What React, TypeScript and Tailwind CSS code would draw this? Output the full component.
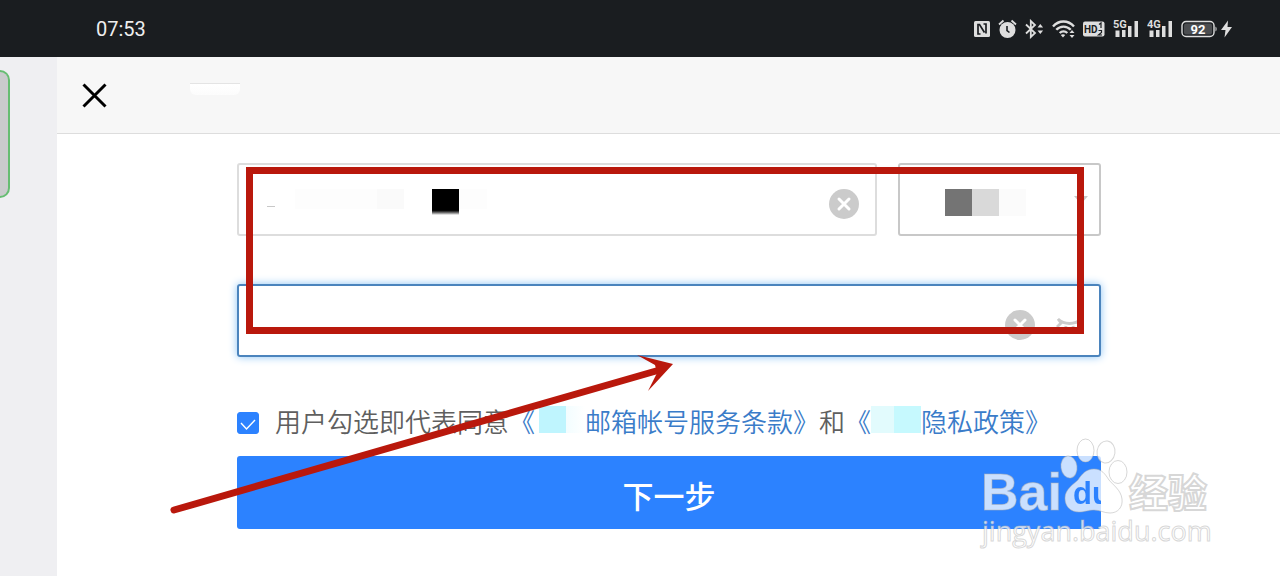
import { useState } from "react";

const SANS = "font-['Roboto','Noto_Sans_CJK_SC',sans-serif]";

function StatusBar() {
  return (
    <header className="flex h-[57px] items-center justify-between bg-[#1a1d20] pl-24 pr-12 text-[#dedede]">
      <time className="text-xl text-[#eeeeee]">07:53</time>
      <div className="flex items-center gap-2">
        <svg width="16" height="18" viewBox="0 0 16 18" fill="none">
          <rect y="1" width="16" height="16" rx="1.5" fill="currentColor" />
          <path d="M6.500 14H4V4.500h1.500l5 8M9.500 4H12v9.500" stroke="#1a1d21" strokeWidth="1.7" />
        </svg>
        <svg width="19" height="20" viewBox="0 0 19 20" fill="none" stroke="currentColor">
          <circle cx="9.5" cy="11" r="8" fill="currentColor" stroke="none" />
          <path d="M1 5.5 5.5 1.500M18 5.5 13.500 1.500" strokeWidth="1.8" />
          <path d="M9 7v4.500l2.500 2" stroke="#1a1d21" strokeWidth="1.6" />
        </svg>
        <svg width="19" height="20" viewBox="0 0 19 20" fill="none" stroke="currentColor" strokeWidth="1.8">
          <path d="m1 5.500 9 8.500-4.200 4V2L10 6l-9 8.500" />
          <path d="m12.500 8.500 2.800-3.500 2.800 3.500zM12.500 11.500l2.800 3.500 2.800-3.500z" fill="currentColor" stroke="none" />
        </svg>
        <svg width="23" height="20" viewBox="0 0 23 20" fill="none" stroke="currentColor" strokeWidth="2.4">
          <path d="M1 7.500C7 .8 16 .8 22 7.500M4.300 10.800c4-4.300 10.400-4.300 14.400 0M7.700 14c2.200-2.200 5.400-2.200 7.600 0" />
          <path d="m8.800 16 2.200 2.500 2.200-2.500c-1.200-1.100-3.200-1.100-4.400 0zM17.500 14l2.500-3 2.500 3zM17.500 16l2.500 3 2.500-3z" fill="currentColor" stroke="none" />
        </svg>
        <svg width="22" height="18" viewBox="0 0 22 18" fill="#1a1d21" className="font-['Roboto',sans-serif] font-bold">
          <rect y="1.500" width="21.500" height="15" rx="2" fill="currentColor" />
          <text x="1" y="13" fontSize="10">HD</text>
          <path d="M16 4.500 18 3v5M15.500 10.500h3v2l-3 2.500h3.500" fill="none" stroke="#1a1d21" strokeWidth="1.200" />
        </svg>
        <Signal label="5G" />
        <Signal label="4G" />
        <div className="flex items-center gap-1">
          <svg width="36" height="18" viewBox="0 0 36 18" fill="none">
            <rect x="1" y="1.500" width="32" height="15" rx="4" stroke="currentColor" strokeWidth="1.400" />
            <rect x="3" y="3.500" width="28" height="11" rx="2" fill="#4b4d50" />
            <path d="M34.500 6.500c1.500 1 1.500 4 0 5z" fill="currentColor" />
            <text x="17" y="13.500" textAnchor="middle" fontSize="13" fill="#fff" className="font-['Roboto',sans-serif] font-bold">92</text>
          </svg>
          <svg width="11" height="18" viewBox="0 0 11 18" fill="currentColor">
            <path d="M7 .5 0 10h4.500L3.500 17.500 11 7H6.500z" />
          </svg>
        </div>
      </div>
    </header>
  );
}

function Signal({ label }: { label: string }) {
  return (
    <svg width="26" height="20" viewBox="0 0 26 20" fill="currentColor">
      <text x="0" y="9" fontSize="11" className="font-['Roboto',sans-serif] font-bold">{label}</text>
      <path d="M2.500 11.500h4V18h-4zM9 11h3.500v7H9zM15 7h3.500v11H15zM21.500 2H25v16h-3.500z" />
    </svg>
  );
}

function ClearButton({ label, onClick }: { label: string; onClick: () => void }) {
  return (
    <button type="button" aria-label={label} onClick={onClick} className="shrink-0">
      <svg width="30" height="30" viewBox="0 0 30 30">
        <circle cx="15" cy="15" r="15" fill="#cbcbcb" />
        <path d="m10 10 10 10M20 10 10 20" stroke="#fff" strokeWidth="3" strokeLinecap="round" />
      </svg>
    </button>
  );
}

function Marks() {
  return (
    <svg width="1280" height="576" viewBox="0 0 1280 576" aria-hidden="true" className="pointer-events-none absolute left-0 top-0">
      <rect x="249.500" y="170.500" width="831" height="160" fill="none" stroke="#b9180c" strokeWidth="7" />
      <path d="M174 510 656 371" stroke="#b9180c" strokeWidth="7" strokeLinecap="round" />
      <path d="m637 355 36 9-25 27 9-18-2-8z" fill="#b9180c" />
    </svg>
  );
}

function Watermark() {
  return (
    <svg
      width="236"
      height="116"
      viewBox="978 434 236 116"
      className="pointer-events-none absolute bottom-[26px] right-[66px]"
    >
      <defs>
        <mask id="du" maskUnits="userSpaceOnUse" x="978" y="434" width="236" height="116">
          <rect x="978" y="434" width="236" height="116" fill="#fff" />
          <text x="1073" y="504" fontSize="31" fill="#000" className="font-['Liberation_Sans',sans-serif] font-bold">du</text>
        </mask>
      </defs>
      <g fill="#fff" fillOpacity="0.750" stroke="#b0b0b0" strokeOpacity="0.500" strokeWidth="1">
        <g mask="url(#du)">
          <ellipse cx="1069" cy="467" rx="8" ry="11" transform="rotate(-8 1069 467)" />
          <ellipse cx="1085.500" cy="450.500" rx="8.500" ry="11.500" />
          <ellipse cx="1106" cy="452" rx="9" ry="11" transform="rotate(8 1106 452)" />
          <ellipse cx="1118" cy="472" rx="9" ry="11.500" />
          <path d="M1094 469c-8 0-12 5-16 11-4 4-13 9-13 18 0 9 6 14 14 14 6 0 9-2 15-2s10 3 16 3c8 0 13-6 12-14-1-9-9-14-13-19-4-6-7-11-15-11z" />
        </g>
        <text x="981" y="510" fontSize="52" className="font-['Liberation_Sans',sans-serif] font-bold">Bai</text>
        <text x="1129" y="507" fontSize="39" strokeWidth="2" className="font-['Noto_Sans_CJK_SC',sans-serif] font-bold">经验</text>
        <text x="982" y="541" fontSize="27" className="font-['Open_Sans',sans-serif]">jingyan.baidu.com</text>
      </g>
    </svg>
  );
}

export default function App() {
  const [account, setAccount] = useState("");
  const [password, setPassword] = useState("");
  const [agreed, setAgreed] = useState(true);

  return (
    <div className={`relative flex min-h-screen flex-col overflow-hidden bg-white ${SANS}`}>
      <StatusBar />

      <div className="flex flex-1">
        <aside className="w-[57px] shrink-0 bg-[#efeff2] pt-[13px]">
          <div className="h-32 w-[10px] rounded-r-[10px] border-2 border-l-0 border-[#66bd72] bg-[#cacbcd]" />
        </aside>

        <main className="flex-1">
          <div className="flex h-[77px] items-center border-b border-[#dddddd] bg-[#f7f7f7] pl-[25px]">
            <button type="button" aria-label="关闭">
              <svg width="25" height="25" viewBox="0 0 25 25" stroke="#000" strokeWidth="3">
                <path d="m1.500 1.500 22 22M23.500 1.500l-22 22" />
              </svg>
            </button>
            <div className="mb-3 ml-[83px] h-3 w-[50px] rounded-b-md border-t border-[#e4e4e4] bg-linear-to-b from-white to-[#fcfcfc]" />
          </div>

          <form className="pl-[180px] pr-[179px] pt-[29px]" onSubmit={(e) => e.preventDefault()}>
            <div className="flex gap-[21px]">
              <div className="relative flex h-[73px] flex-1 items-center rounded-[3px] border-2 border-[#dddddd] pl-8 pr-4 pt-2">
                <input
                  aria-label="邮箱帐号"
                  value={account}
                  onChange={(e) => setAccount(e.target.value)}
                  className="h-full min-w-0 flex-1 text-2xl outline-none"
                />
                <ClearButton label="清除帐号" onClick={() => setAccount("")} />
                <div className="pointer-events-none absolute left-7 top-6 flex">
                  <div className="mt-[17px] h-px w-2 bg-[#c8c8c8]" />
                  <div className="ml-5 h-5 w-[82px] bg-[#fdfdfd]" />
                  <div className="h-5 w-[27px] bg-[#fafafa]" />
                  <div className="ml-7 h-[26px] w-[27px] bg-linear-to-b from-black from-80% to-white" />
                  <div className="h-5 w-7 bg-[#fdfdfd]" />
                </div>
              </div>

              <div className="relative h-[73px] w-[203px]">
                <select
                  aria-label="邮箱后缀"
                  className="h-full w-full appearance-none rounded-[3px] border-2 border-[#c8c8c8] bg-white"
                />
                <div className="pointer-events-none absolute left-[47px] top-[26px] flex">
                  <div className="size-[27px] bg-[#747474]" />
                  <div className="size-[27px] bg-[#d9d9d9]" />
                  <div className="size-[27px] bg-[#fbfbfb]" />
                </div>
                <svg width="14" height="8" viewBox="0 0 14 8" className="pointer-events-none absolute right-[13px] top-[33px]">
                  <path d="M0 0h14L7 8z" fill="#c8c8c8" />
                </svg>
              </div>
            </div>

            <div className="mt-12 flex h-[73px] items-center gap-5 rounded-[3px] border-2 border-[#4b84bd] pl-8 pr-4 pt-2 shadow-[0_0_8px_#8cc4f5]">
              <input
                type="password"
                aria-label="密码"
                value={password}
                onChange={(e) => setPassword(e.target.value)}
                className="h-full min-w-0 flex-1 text-2xl outline-none"
              />
              <ClearButton label="清除密码" onClick={() => setPassword("")} />
              <button type="button" aria-label="显示密码">
                <svg width="28" height="16" viewBox="0 0 28 16" fill="none" stroke="#cbcbcb" strokeWidth="2.800">
                  <path d="M2 10 6 6 3 2c6 6 17 6 23 0l-3 4 4 4M11 9l-1 5M18 9l1 5" />
                </svg>
              </button>
            </div>

            <div className="mt-[46px] flex h-10 items-center text-[26px] leading-10 text-[#5f5f5f]">
              <span className="relative size-[22px] shrink-0">
                <input
                  id="agree"
                  type="checkbox"
                  checked={agreed}
                  onChange={(e) => setAgreed(e.target.checked)}
                  className="peer block size-[22px] appearance-none rounded-[3px] border border-[#2c82ff] checked:bg-[#2c82ff]"
                />
                <svg width="22" height="22" viewBox="0 0 22 22" fill="none" stroke="#fff" strokeWidth="1.400" className="pointer-events-none absolute inset-0 hidden peer-checked:block">
                  <path d="m4 11 5.500 6L18 8" />
                </svg>
              </span>
              <label htmlFor="agree" className="ml-4 whitespace-nowrap font-[350]">用户勾选即代表同意</label>
              <a href="#terms" className="flex items-center whitespace-nowrap font-[350] text-[#3a7cc9]">
                《
                <span className="mb-2 ml-1 flex">
                  <span className="h-[27px] w-[27px] bg-[#bff5fe]" />
                  <span className="h-[27px] w-[19px] bg-linear-to-r from-[#f2fdff] to-white" />
                </span>
                邮箱帐号服务条款》
              </a>
              <span className="font-[350]">和</span>
              <a href="#privacy" className="flex items-center whitespace-nowrap font-[350] text-[#3a7cc9]">
                《
                <span className="mb-2 flex">
                  <span className="h-[27px] w-[23px] bg-[#e2fbfd]" />
                  <span className="h-[27px] w-[27px] bg-[#c6f9fe]" />
                </span>
                隐私政策》
              </a>
            </div>

            <button type="submit" className="mt-[13px] h-[73px] w-full rounded-[3px] bg-[#2c82ff] pt-3 text-[31px] font-medium text-white">
              下一步
            </button>
          </form>
        </main>
      </div>

      <Marks />
      <Watermark />
    </div>
  );
}
